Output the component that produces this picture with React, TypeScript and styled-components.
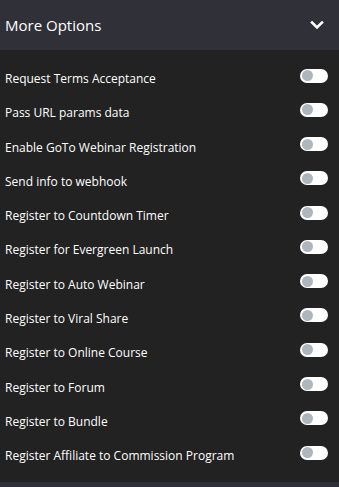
import React from "react";
import styled, { createGlobalStyle } from "styled-components";

const Global = createGlobalStyle`
  html, body { margin: 0; padding: 0; background: #222222; }
  body { font-family: "Open Sans", "Liberation Sans", sans-serif; }
`;

const Panel = styled.div`
  width: 339px;
  height: 487px;
  display: flex;
  flex-direction: column;
  background: #222222;
  overflow: hidden;
`;

const Header = styled.div`
  height: 50px;
  flex: none;
  display: flex;
  align-items: center;
  justify-content: space-between;
  padding: 0 15px 0 5px;
  background: #2f3038;
  color: #ffffff;
  font-size: 15px;
  box-sizing: border-box;
`;

const Title = styled.span`
  line-height: 20px;
`;

const List = styled.div`
  flex: none;
  height: 432px;
  box-sizing: border-box;
  padding: 10px 0 0 0;
  display: flex;
  flex-direction: column;
`;

const Row = styled.div`
  height: 34.27px;
  flex: none;
  display: flex;
  align-items: center;
  justify-content: space-between;
  padding: 0 11px 0 5px;
`;

const Label = styled.span`
  color: #ffffff;
  font-size: 12px;
  line-height: 16px;
  margin-top: 4px;
`;

const Switch = styled.span`
  position: relative;
  width: 28px;
  height: 14px;
  border-radius: 7px;
  background: #ffffff;
  flex: none;
  margin-bottom: 3px;
  &::after {
    content: "";
    position: absolute;
    left: 2px;
    top: 1.5px;
    width: 11px;
    height: 11px;
    border-radius: 50%;
    background: #adb5bd;
  }
`;

const Footer = styled.div`
  flex: 1;
  background: #2e2e36;
`;

const items = [
  "Request Terms Acceptance",
  "Pass URL params data",
  "Enable GoTo Webinar Registration",
  "Send info to webhook",
  "Register to Countdown Timer",
  "Register for Evergreen Launch",
  "Register to Auto Webinar",
  "Register to Viral Share",
  "Register to Online Course",
  "Register to Forum",
  "Register to Bundle",
  "Register Affiliate to Commission Program",
];

export default function App() {
  return (
    <Panel>
      <Global />
      <Header>
        <Title>More Options</Title>
        <svg width="14" height="10" viewBox="0 0 14 10">
          <polyline points="2,2.5 7,7.5 12,2.5" fill="none" stroke="#ffffff" strokeWidth="2.6" strokeLinecap="square" />
        </svg>
      </Header>
      <List>
        {items.map((t) => (
          <Row key={t}>
            <Label>{t}</Label>
            <Switch />
          </Row>
        ))}
      </List>
      <Footer />
    </Panel>
  );
}
